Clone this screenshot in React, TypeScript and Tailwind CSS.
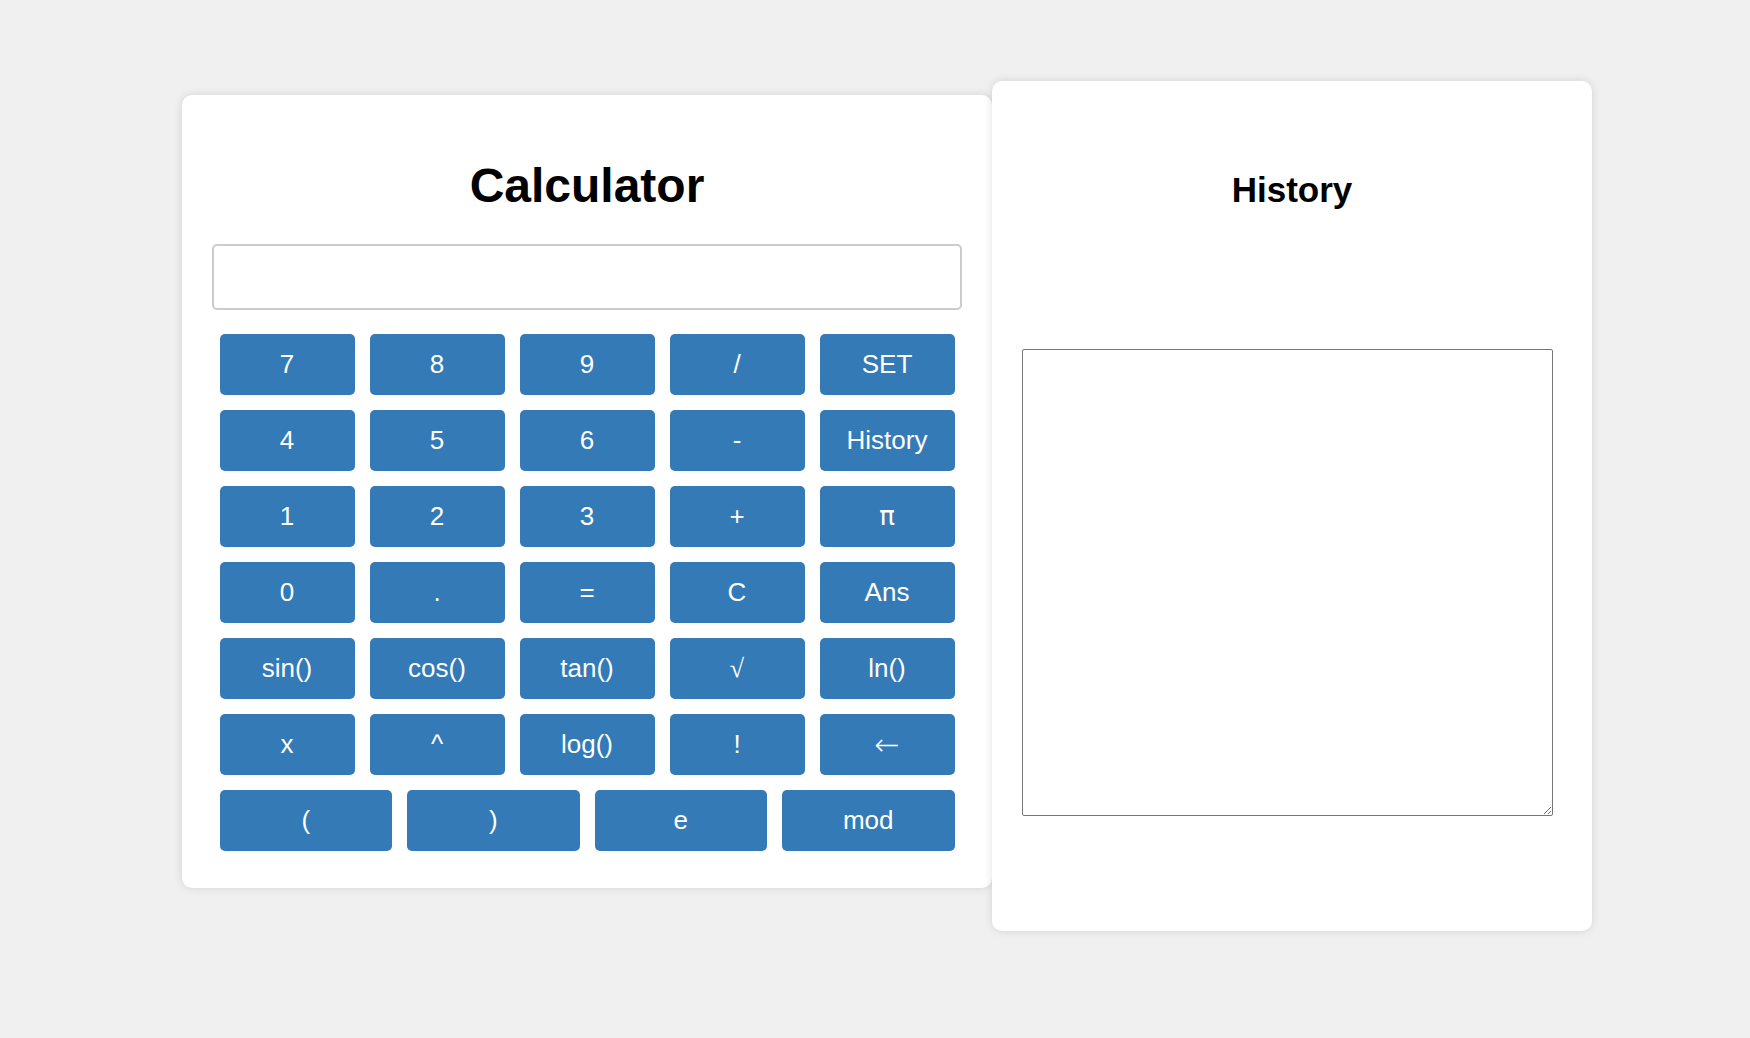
import React from 'react';

const rows = [
  ['7', '8', '9', '/', 'SET'],
  ['4', '5', '6', '-', 'History'],
  ['1', '2', '3', '+', 'π'],
  ['0', '.', '=', 'C', 'Ans'],
  ['sin()', 'cos()', 'tan()', '√', 'ln()'],
  ['x', '^', 'log()', '!', '←'],
];

const lastRow = ['(', ')', 'e', 'mod'];

// symbols the original renders from fallback fonts
const glyphFont: Record<string, string> = {
  '√': '"Liberation Serif", "DejaVu Serif", serif',
  '←': '"DejaVu Sans", sans-serif',
  'π': '"DejaVu Sans", sans-serif',
};

const Key = ({ label }: { label: string }) => (
  <button className="h-[61px] rounded-[5px] bg-[#337ab7] text-[26px] text-white">
    {glyphFont[label] ? (
      <span className={label === '←' ? 'text-[30px] font-extralight' : ''} style={{ fontFamily: glyphFont[label] }}>
        {label}
      </span>
    ) : (
      label
    )}
  </button>
);

const App = () => {
  return (
    <div
      className="min-h-[1038px] bg-[#f0f0f0] pl-[182px] pt-[81px]"
      style={{ fontFamily: '"Liberation Sans", Arial, sans-serif' }}
    >
      <div className="flex items-start">
        {/* Calculator */}
        <div className="mt-[14px] w-[810px] rounded-[10px] bg-white px-[30px] pt-[63px] pb-[37px] shadow-[0_0_10px_rgba(0,0,0,0.12)]">
          <h1 className="text-center text-[48px] font-bold leading-[55px] text-black">Calculator</h1>
          <input
            type="text"
            className="mt-[31px] block h-[66px] w-full rounded-[5px] border-2 border-[#cccccc] bg-white px-2 text-[26px] outline-none"
          />
          <div className="mx-[7.5px] mt-[24px] grid grid-cols-5 gap-[15px]">
            {rows.flat().map((k, i) => (
              <Key key={i} label={k} />
            ))}
          </div>
          <div className="mx-[7.5px] mt-[15px] grid grid-cols-4 gap-[15px]">
            {lastRow.map((k) => (
              <Key key={k} label={k} />
            ))}
          </div>
        </div>

        {/* History */}
        <div className="h-[850px] w-[600px] rounded-[10px] bg-white pl-[30px] pt-[89px] shadow-[0_0_10px_rgba(0,0,0,0.12)]">
          <h2 className="pr-[30px] text-center text-[35px] font-bold leading-[40px] text-black">History</h2>
          <textarea className="mt-[139px] block h-[467px] w-[531px] rounded-[2px] border border-[#767676] bg-white p-[2px]" />
        </div>
      </div>
    </div>
  );
};

export default App;
